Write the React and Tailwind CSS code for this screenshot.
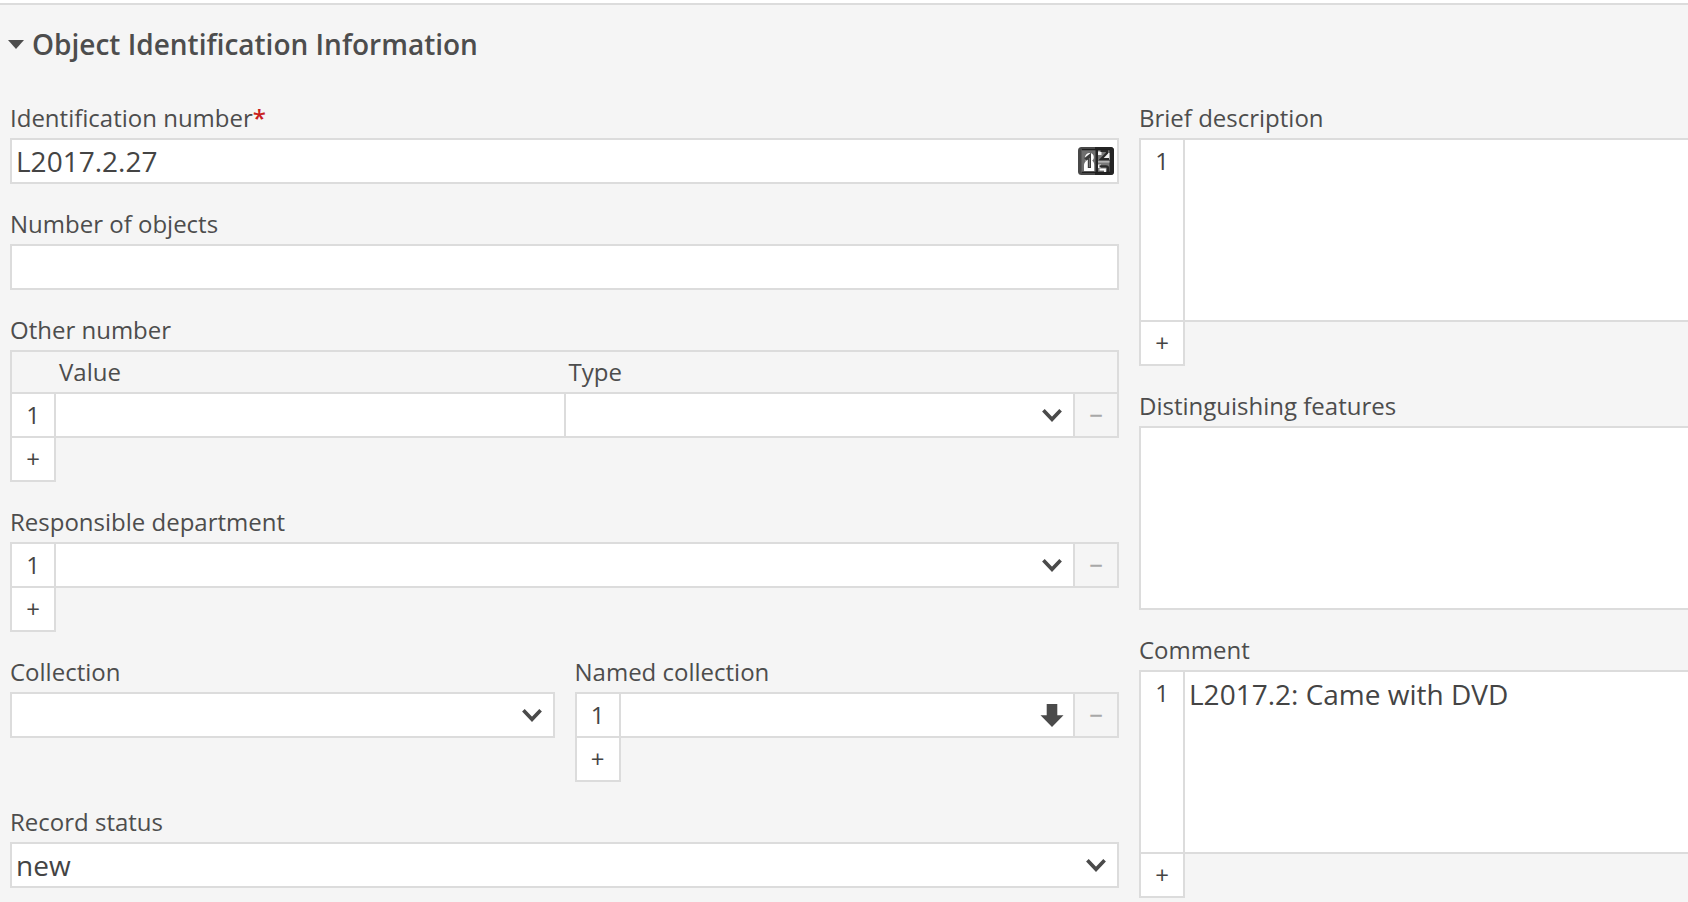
import { useState } from "react";

function Chevron() {
  return (
    <svg
      viewBox="0 0 42 42"
      className="pointer-events-none absolute top-0 right-0 h-[42px] w-[42px]"
      aria-hidden="true"
    >
      <path d="M12.4 16.2 21 25.3l8.6-9.1" fill="none" stroke="#4a4a4a" strokeWidth="3.6" />
    </svg>
  );
}

function ArrowDown() {
  return (
    <svg viewBox="0 0 24 24" className="h-6 w-6" aria-hidden="true">
      <path d="M6.7 1h10.6v11.2h6.2L12 24 .5 12.2h6.2z" fill="#4a4a4a" />
    </svg>
  );
}

function CounterIcon() {
  return (
    <svg viewBox="0 0 36 28" className="h-7 w-9" aria-hidden="true">
      <rect x="0" y="0" width="36" height="28" rx="3.5" fill="#484848" />
      <path d="M17 0h15.5A3.5 3.5 0 0 1 36 3.5v21a3.500 3.500 0 0 1-3.500 3.500H17z" fill="#242424" />
      <rect x="3.500" y="3" width="14" height="22" fill="#6e6e6e" />
      <rect x="20" y="3" width="11.500" height="22" fill="#7a7a7a" />
      <path d="M4 2.600h28M4 25.400h28" stroke="#1f1f1f" strokeWidth="1.400" />
      <path d="M7 10c.6-2.800 2.400-4 4.500-4 2.800 0 4.300 1.700 4.300 4.200 0 1.500-.6 2.600-1.600 3.400 1.500 1.200 2 2.600 2 4.700V24H6v-5.500c0-1.800.6-3.200 1.800-4.300z" fill="#ffffff" />
      <path d="M7.200 12.600 11.400 9.200V21" fill="none" stroke="#3c3c3c" strokeWidth="3.200" />
      <path d="M11.400 11V20" fill="none" stroke="#7c7c7c" strokeWidth="1" />
      <path d="M20 4.500h3.500v3.500H20zM22 12.500 28 6h3.500v6.500zM20 17.500h3V21h-3z" fill="#f2f2f2" />
      <path d="M20 14.800h11.500" stroke="#b4b4b4" strokeWidth="1.600" />
      <path d="M22.500 4H29v2l-6 6.200h8" fill="none" stroke="#2a2a2a" strokeWidth="2.200" />
      <path d="M21.500 19.400H28q2 0 2 2V25" fill="none" stroke="#2a2a2a" strokeWidth="2.400" />
      <path d="M21.500 22.500h5.500V25" fill="none" stroke="#ffffff" strokeWidth="1.800" />
    </svg>
  );
}

const control = "block h-[42px] w-full bg-white px-1 text-[28px] leading-[42px] text-[#444444] outline-none";

function TextInput(props) {
  return <input type="text" className={control} {...props} />;
}

function SelectInput({ options = [""], ...rest }) {
  return (
    <div className="relative min-w-0 flex-1">
      <select className={`${control} appearance-none`} {...rest}>
        {options.map((o) => (
          <option key={o}>{o}</option>
        ))}
      </select>
      <Chevron />
    </div>
  );
}

function AddButton({ label }) {
  return (
    <button type="button" aria-label={label} className="block h-[42px] w-[42px] bg-white text-center leading-[42px] text-[#444444]">
      +
    </button>
  );
}

function RemoveButton() {
  return (
    <button type="button" disabled aria-label="Remove row" className="block h-[42px] w-[42px] text-center leading-[42px] font-semibold text-[#a8a8a8]">
      −
    </button>
  );
}

function Field({ label, htmlFor, required, children }) {
  return (
    <div className="min-w-0">
      <label htmlFor={htmlFor} className="mb-1 block leading-8">
        {label}
        {required && <span className="font-semibold text-[#c9211e]">*</span>}
      </label>
      {children}
    </div>
  );
}

function Box({ children }) {
  return <div className="flex border-2 border-[#dcdcdc] bg-white">{children}</div>;
}

function Repeating({ name, removable, openEnd, children }) {
  return (
    <div>
      <div className={openEnd ? "flex border-2 border-r-0 border-[#dcdcdc] bg-white" : "flex border-2 border-[#dcdcdc] bg-white"}>
        <div className="w-11 shrink-0 border-r-2 border-[#dcdcdc] text-center leading-[42px] text-[#444444]">1</div>
        <div className="flex min-w-0 flex-1">{children}</div>
        {removable && (
          <div className="w-11 shrink-0 border-l-2 border-[#dcdcdc] bg-[#f5f5f5]">
            <RemoveButton />
          </div>
        )}
      </div>
      <div className="w-[46px] border-2 border-t-0 border-[#dcdcdc]">
        <AddButton label={`Add ${name}`} />
      </div>
    </div>
  );
}

function TextArea(props) {
  return (
    <textarea
      className="block h-[180px] w-full resize-none bg-white px-1 pt-0.5 text-[28px] leading-10 text-[#444444] outline-none"
      {...props}
    />
  );
}

export default function App() {
  const [open, setOpen] = useState(true);

  return (
    <main className="min-h-screen overflow-x-hidden bg-white pt-[3px] font-['Open_Sans','Noto_Sans',sans-serif] text-2xl text-[#4d4d4d]">
      <section className="min-h-[calc(100vh-3px)] border-t-2 border-[#dcdcdc] bg-[#f5f5f5] pt-[19px] pb-1">
        <h2 className="mb-[38px] text-[28px] leading-10 font-semibold">
          <button type="button" aria-expanded={open} onClick={() => setOpen(!open)} className="flex items-center gap-2 pl-2">
            <svg viewBox="0 0 16 9" className={open ? "h-[9px] w-4" : "h-[9px] w-4 -rotate-90"} aria-hidden="true">
              <path d="M0 0h16L8 9z" fill="#4d4d4d" />
            </svg>
            Object Identification Information
          </button>
        </h2>

        {open && (
          <div className="grid grid-cols-[1109fr_549fr] items-start gap-5 pl-2.5">
            <div className="flex min-w-0 flex-col gap-6">
              <Field label="Identification number" htmlFor="id-number" required>
                <Box>
                  <TextInput id="id-number" defaultValue="L2017.2.27" required />
                  <button type="button" aria-label="Generate number" className="flex h-[42px] w-[42px] shrink-0 items-center justify-center">
                    <CounterIcon />
                  </button>
                </Box>
              </Field>

              <Field label="Number of objects" htmlFor="object-count">
                <Box>
                  <TextInput id="object-count" />
                </Box>
              </Field>

              <Field label="Other number" htmlFor="other-value">
                <table className="w-full table-fixed border-collapse">
                  <thead>
                    <tr className="h-[42px] border-2 border-[#dcdcdc] text-left">
                      <td className="w-11"></td>
                      <th scope="col" className="px-1 py-0 leading-10 font-normal">Value</th>
                      <th scope="col" className="px-1 py-0 leading-10 font-normal">Type</th>
                      <td className="w-11"></td>
                    </tr>
                  </thead>
                  <tbody>
                    <tr>
                      <td className="border-2 border-[#dcdcdc] bg-white p-0 text-center leading-[42px] text-[#444444]">1</td>
                      <td className="border-2 border-[#dcdcdc] p-0">
                        <TextInput id="other-value" />
                      </td>
                      <td className="border-2 border-[#dcdcdc] p-0">
                        <SelectInput aria-label="Type" />
                      </td>
                      <td className="border-2 border-[#dcdcdc] p-0">
                        <RemoveButton />
                      </td>
                    </tr>
                    <tr>
                      <td className="border-2 border-[#dcdcdc] p-0">
                        <AddButton label="Add other number" />
                      </td>
                    </tr>
                  </tbody>
                </table>
              </Field>

              <Field label="Responsible department" htmlFor="department">
                <Repeating name="responsible department" removable>
                  <SelectInput id="department" />
                </Repeating>
              </Field>

              <div className="grid grid-cols-2 gap-5">
                <Field label="Collection" htmlFor="collection">
                  <Box>
                    <SelectInput id="collection" />
                  </Box>
                </Field>
                <Field label="Named collection" htmlFor="named-collection">
                  <Repeating name="named collection" removable>
                    <TextInput id="named-collection" />
                    <button type="button" aria-label="Show matches" className="flex h-[42px] w-[42px] shrink-0 items-center justify-center">
                      <ArrowDown />
                    </button>
                  </Repeating>
                </Field>
              </div>

              <Field label="Record status" htmlFor="record-status">
                <Box>
                  <SelectInput id="record-status" options={["new"]} />
                </Box>
              </Field>
            </div>

            <div className="flex min-w-0 flex-col gap-6">
              <Field label="Brief description" htmlFor="brief-description">
                <Repeating name="brief description" openEnd>
                  <TextArea id="brief-description" />
                </Repeating>
              </Field>

              <Field label="Distinguishing features" htmlFor="features">
                <div className="border-2 border-r-0 border-[#dcdcdc]">
                  <TextArea id="features" />
                </div>
              </Field>

              <Field label="Comment" htmlFor="comment">
                <Repeating name="comment" openEnd>
                  <TextArea id="comment" defaultValue="L2017.2: Came with DVD" />
                </Repeating>
              </Field>
            </div>
          </div>
        )}
      </section>
    </main>
  );
}
